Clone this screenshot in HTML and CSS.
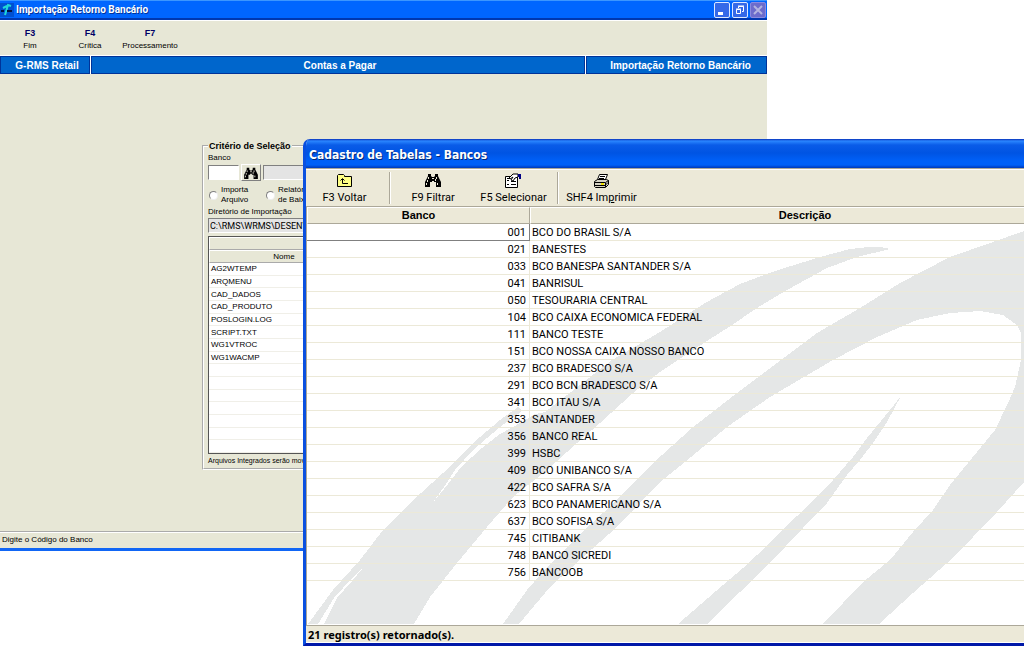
FILE: index.html
```html
<!DOCTYPE html>
<html lang="pt-BR">
<head>
<meta charset="utf-8">
<title>Cadastro de Tabelas - Bancos</title>
<link rel="stylesheet" href="styles.css">
</head>
<body>
<main class="desktop">
  <section class="import-window" aria-label="Importação Retorno Bancário">
    <header class="import-title">
      <svg class="app-icon" width="14" height="14" viewBox="0 0 14 14" aria-hidden="true"><rect width="14" height="14" fill="#0050d0"/><path d="M5 12L8 2l3 1M3 5l4-2" stroke="#20d8d8" stroke-width="2" fill="none"/><path d="M1 8h3M7 8h5" stroke="#001040" stroke-width="2"/></svg>
      <h1>Importação Retorno Bancário</h1>
      <div class="window-buttons">
        <button type="button" aria-label="Minimizar"><svg width="14" height="14" viewBox="0 0 14 14"><path d="M3 10.500h5" stroke="#fff" stroke-width="3"/></svg></button>
        <button type="button" aria-label="Restaurar"><svg width="14" height="14" viewBox="0 0 14 14"><path d="M5.500 5V3.500h5v5H9M3.500 6.500h4v4h-4zM5 3h6M3 6h5" stroke="#fff" fill="none"/></svg></button>
        <button type="button" class="close" aria-label="Fechar"><svg width="14" height="14" viewBox="0 0 14 14"><path d="M3 3l8 8M11 3l-8 8" stroke="#b4b4e0" stroke-width="2"/></svg></button>
      </div>
    </header>
    <nav class="import-menu">
      <button type="button"><b>F3</b><span>Fim</span></button>
      <button type="button"><b>F4</b><span>Crítica</span></button>
      <button type="button"><b>F7</b><span>Processamento</span></button>
    </nav>
    <div class="path-bar">
      <span>G-RMS Retail</span><span>Contas a Pagar</span><span>Importação Retorno Bancário</span>
    </div>
    <form class="import-body">
      <fieldset class="criteria">
        <legend>Critério de Seleção</legend>
        <label for="banco">Banco</label>
        <div class="bank-row">
          <input id="banco" type="text">
          <button type="button" aria-label="Procurar banco"><svg width="14" height="12" viewBox="0 0 16 14"><use href="#binoculars"/></svg></button>
          <input class="bank-name" type="text" readonly aria-label="Nome do banco">
        </div>
        <div class="mode-row">
          <label><input type="radio" name="modo"><span>Importa<br>Arquivo</span></label>
          <label><input type="radio" name="modo"><span>Relatório<br>de Baixas</span></label>
        </div>
        <label for="dir">Diretório de Importação</label>
        <input id="dir" class="directory" type="text" readonly value="C:\RMS\WRMS\DESENV">
        <table class="files">
          <thead>
            <tr><th class="name"></th><th></th></tr>
            <tr><th>Nome</th><th></th></tr>
          </thead>
          <tbody>
            <tr><td>AG2WTEMP</td><td></td></tr>
            <tr><td>ARQMENU</td><td></td></tr>
            <tr><td>CAD_DADOS</td><td></td></tr>
            <tr><td>CAD_PRODUTO</td><td></td></tr>
            <tr><td>POSLOGIN.LOG</td><td></td></tr>
            <tr><td>SCRIPT.TXT</td><td></td></tr>
            <tr><td>WG1VTROC</td><td></td></tr>
            <tr><td>WG1WACMP</td><td></td></tr>
            <tr><td></td><td></td></tr>
            <tr><td></td><td></td></tr>
            <tr><td></td><td></td></tr>
            <tr><td></td><td></td></tr>
            <tr><td></td><td></td></tr>
            <tr><td></td><td></td></tr>
            <tr><td></td><td></td></tr>
          </tbody>
        </table>
        <p class="note">Arquivos Integrados serão movidos</p>
      </fieldset>
    </form>
    <footer class="import-status">Digite o Código do Banco</footer>
  </section>

  <section class="banks-window" aria-label="Cadastro de Tabelas - Bancos">
    <header class="banks-title"><h2>Cadastro de Tabelas - Bancos</h2></header>
    <div class="toolbar">
      <button type="button" class="tool-back">
        <svg width="16" height="14" viewBox="0 0 16 14" aria-hidden="true"><path d="M.5 13.500v-11l1-1h5l1 1v1h7v10z" fill="#ffff84" stroke="#000"/><path d="M5.500 6v4.500H11M3.500 7.500l2-2 2 2" fill="none" stroke="#000"/></svg>
        F3 Voltar
      </button>
      <button type="button" class="tool-filter">
        <svg width="16" height="14" viewBox="0 0 16 14" aria-hidden="true"><g id="binoculars"><path d="M3 1h3v2l1 1h2l1-1V1h3v2l3 6v5h-5V9H9V8H7v1H5v5H0V9l3-6z" fill="#000"/><path d="M3.500 4v2M2.500 7v2M1.500 10v2M11.500 4v2M10.500 6v2M12.500 10v2M7 5.500h2" stroke="#ece9d8"/></g></svg>
        F9 Filtrar
      </button>
      <button type="button" class="tool-select">
        <svg width="18" height="16" viewBox="0 0 18 16" aria-hidden="true"><path d="M.5 3.500h12v11H.5z" fill="#fff" stroke="#000"/><path d="M2 7.500h2M6 8.500h5M2 11.500h2M6 11.500h5M2 5.500h2" stroke="#000"/><path d="M4 5l4-4h5v3l-3 1-2 3-2-1 2-3-3 2z" fill="#fff" stroke="#000"/><path d="M13 1h3v5h-2V4h-1z" fill="#000084"/></svg>
        F5 Selecionar
      </button>
      <button type="button" class="tool-print">
        <svg width="18" height="16" viewBox="0 0 18 16" aria-hidden="true"><path d="M4.500 6.500l2-5h8l-2 5z" fill="#fff" stroke="#000"/><path d="M7 3.500h5M6 5.500h5" stroke="#000"/><path d="M1.500 8.500l3-2h9l2 1v4l-3 3h-10l-1-1z" fill="#d6d3c4" stroke="#000"/><path d="M1.500 9.500h11l3-2M2 12.500h10l3-3M12.500 10v4" fill="none" stroke="#000"/><path d="M8 11h3" stroke="#f0e000" stroke-width="2"/></svg>
        <span>SHF4 Im<u>p</u>rimir</span>
      </button>
    </div>
    <div class="grid">
      <svg class="watermark" viewBox="307 224 773 400" preserveAspectRatio="xMinYMin meet" aria-hidden="true">
        <g fill="#e5e7e7" shape-rendering="crispEdges">
          <path d="M890 249L880 247L868 247L850 249L820 257L775 271L740 284L705 303L660 332L612 360L580 385L545 412L535 414L522 422L500 434L482 448L462 466L444 489L431 505L444 487L455 470L473 450L500 427L522 411L518 407L500 420L473 443L443 473L410 503L383 530L360 560L333 590L308 624H414L430 597L457 563L487 527L513 497L547 470L577 443L600 423L633 393L660 372L693 350L732 325L757 308L787 290L827 268L857 257Z"/>
          <path d="M1024 231L993 242L950 257L900 283L860 308L817 333L777 363L737 393L692 428L662 455L633 483L603 513L577 537L547 567L527 590L503 624H519L550 587L583 557L617 527L660 482L685 462L727 427L770 397L833 360L877 337L917 320L950 313L980 311L1003 315L1017 325L1021 333V360L1015 387L1008 403L995 430L972 458L950 485L933 510L913 532L890 560L863 582L823 624H879L913 593L947 563L973 537L997 512L1024 482Z"/>
          <path d="M901 396L890 410L867 438L853 457L833 480L807 507L787 525L770 543L743 568L723 585L678 624H707L740 592L770 563L803 528L827 503L847 475L860 460L873 443L887 422Z"/>
          <path fill="#fff" d="M318 624L334 598L353 577L367 563L352 581L337 598L324 624Z"/>
        </g>
      </svg>
      <table class="banks">
        <thead><tr><th class="code">Banco</th><th>Descrição</th></tr></thead>
        <tbody>
          <tr><td class="current">001</td><td>BCO DO BRASIL S/A</td></tr>
          <tr><td>021</td><td>BANESTES</td></tr>
          <tr><td>033</td><td>BCO BANESPA SANTANDER S/A</td></tr>
          <tr><td>041</td><td>BANRISUL</td></tr>
          <tr><td>050</td><td>TESOURARIA CENTRAL</td></tr>
          <tr><td>104</td><td>BCO CAIXA ECONOMICA FEDERAL</td></tr>
          <tr><td>111</td><td>BANCO TESTE</td></tr>
          <tr><td>151</td><td>BCO NOSSA CAIXA NOSSO BANCO</td></tr>
          <tr><td>237</td><td>BCO BRADESCO S/A</td></tr>
          <tr><td>291</td><td>BCO BCN BRADESCO S/A</td></tr>
          <tr><td>341</td><td>BCO ITAU S/A</td></tr>
          <tr><td>353</td><td>SANTANDER</td></tr>
          <tr><td>356</td><td>BANCO REAL</td></tr>
          <tr><td>399</td><td>HSBC</td></tr>
          <tr><td>409</td><td>BCO UNIBANCO S/A</td></tr>
          <tr><td>422</td><td>BCO SAFRA S/A</td></tr>
          <tr><td>623</td><td>BCO PANAMERICANO S/A</td></tr>
          <tr><td>637</td><td>BCO SOFISA S/A</td></tr>
          <tr><td>745</td><td>CITIBANK</td></tr>
          <tr><td>748</td><td>BANCO SICREDI</td></tr>
          <tr><td>756</td><td>BANCOOB</td></tr>
        </tbody>
      </table>
    </div>
    <footer class="banks-status">21 registro(s) retornado(s).</footer>
  </section>
</main>
</body>
</html>
```
FILE: styles.css
```css
* { box-sizing: border-box; }
body { margin: 0; background: #fff; color: #000; font-family: "Liberation Sans", Arial, sans-serif; }
h1, h2, p { margin: 0; }
button, input { font: inherit; color: inherit; margin: 0; }
button { padding: 0; border: 0; background: none; }
table { border-collapse: separate; border-spacing: 0; table-layout: fixed; width: 100%; }
th, td { padding: 0; overflow: hidden; white-space: nowrap; }

.desktop { position: relative; height: 100vh; overflow: hidden; }

/* Import window */
.import-window { position: absolute; left: 0; top: 0; bottom: 99px; width: 767px; display: flex; flex-direction: column; background: #e7e7d6; font-size: 8px; border-bottom: 3px solid #1166f5; }
.import-title { display: flex; align-items: center; gap: 2px; height: 20px; border-top: 1px solid #3c96ff; border-bottom: 2px solid #0038b0; background: #0066ff; color: #fff; }
.import-title h1 { flex: 1; font: bold 10px/18px Roboto, sans-serif; text-shadow: 1px 1px #003399; }
.window-buttons { display: flex; gap: 2px; padding-right: 1px; }
.window-buttons button { width: 16px; height: 16px; border: 1px solid #dce8ff; border-radius: 2px; background: #3569e8; display: flex; }
.window-buttons .close { border-color: #8a8ae0; background: #6c6ccc; }
.import-menu { display: flex; height: 36px; padding-top: 6px; border-top: 1px solid #fff; border-bottom: 1px solid #fff; }
.import-menu button { width: 60px; display: flex; flex-direction: column; align-items: center; line-height: 14px; white-space: nowrap; }
.import-menu b { color: #000066; font-size: 9px; line-height: 12px; }
.path-bar { display: grid; grid-template-columns: 90px 1fr 181px; column-gap: 1px; height: 18px; background: #fff; border-bottom: 1px solid #fff; }
.path-bar span { padding: 1px 0 0 4px; background: #0066cc; border: 1px solid #003399; color: #fff; font-size: 10px; font-weight: bold; line-height: 15px; text-align: center; white-space: nowrap; }
.path-bar span:last-child { padding-left: 8px; }
.import-body { flex: 1; padding: 66px 200px 0 202px; }
.criteria { margin: 0; padding: 1px 4px 2px; min-width: 0; border: 2px groove #fff; line-height: 10px; }
.criteria legend { padding: 0 1px; font-size: 9px; font-weight: bold; line-height: 12px; }
.criteria > label { display: block; height: 11px; white-space: nowrap; }
.criteria input[type="text"] { display: block; height: 15px; padding: 0 1px; border: 1px solid; border-color: #808080 #fff #fff #808080; border-radius: 0; background: #fff; outline: 0; }
.bank-row { display: flex; gap: 2px; align-items: center; height: 17px; }
.bank-row input { width: 31px; }
.bank-row button { width: 20px; height: 17px; border: 1px solid; border-color: #fff #808080 #808080 #fff; display: grid; place-items: center; }
.criteria .bank-name { flex: 1; }
.criteria input[readonly] { background: #e4e4e4; }
.mode-row { display: flex; gap: 12px; padding: 4px 0 2px 1px; }
.mode-row label { display: flex; align-items: center; gap: 3px; width: 45px; white-space: nowrap; }
.mode-row input { appearance: none; flex: none; width: 9px; height: 9px; border: 1px solid; border-color: #808080 #eee #eee #808080; border-radius: 50%; background: #fff; }
.criteria .directory { width: 100%; margin-bottom: 3px; font: 9px Roboto, sans-serif; }
.files { height: 218px; border: 1px solid #555; background: #fff; }
.files .name { width: 150px; }
.files th { height: 13px; background: #e7e7d6; border: 1px solid; border-color: #fff #aaa #aaa #fff; font-weight: normal; line-height: 11px; }
.files td { height: 12px; padding: 1px 0 0 2px; border-bottom: 1px solid #f0efe8; line-height: 10px; }
.note { padding-top: 2px; font-size: 7px; white-space: nowrap; }
.import-status { height: 17px; border-top: 1px solid #aaa; padding-left: 2px; line-height: 15px; box-shadow: inset 0 1px #fff; }

/* Bank table window, running past the right edge of the desktop */
.banks-window { position: absolute; left: 303px; right: -56px; top: 139px; bottom: 4px; display: flex; flex-direction: column; background: #ece9d8; border-left: 3px solid #0a50e0; border-bottom: 3px solid #0018a8; border-top-left-radius: 7px; overflow: hidden; font-size: 11px; }
.banks-title { height: 29px; padding-left: 3px; background: linear-gradient(#0830b8 0, #2a86ff 2px, #0a5ce8 6px, #0054e3 14px, #0060f8 22px, #0060f8 26px, #0038b8 29px); color: #fff; }
.banks-title h2 { font: bold 12px/33px "DejaVu Sans Condensed", "Noto Sans", sans-serif; text-shadow: 1px 1px #002878; }
.toolbar { display: flex; height: 39px; padding-top: 3px; border-top: 1px solid #aca899; border-bottom: 1px solid #aca899; box-shadow: inset 0 1px #fff; font-family: Roboto, sans-serif; }
.toolbar button { display: flex; flex-direction: column; align-items: center; justify-content: space-between; height: 32px; line-height: 13px; white-space: nowrap; }
.toolbar svg { margin-top: 1px; }
.toolbar .tool-back, .toolbar .tool-select { border-right: 1px solid #aca899; box-shadow: 1px 0 #fff; }
.tool-back { width: 84px; padding-right: 6px; }
.tool-filter { width: 86px; }
.toolbar .tool-select { width: 82px; padding-right: 6px; }
.tool-print { width: 87px; }
.grid { position: relative; flex: 1; min-height: 0; overflow: hidden; background: #fff; border-left: 1px solid #aca899; }
.watermark { position: absolute; left: 0; top: 17px; width: 100%; }
.banks { position: relative; }
.banks th { height: 17px; background: #ece9d8; border: 1px solid; border-color: #fff #aca899 #aca899 #fff; line-height: 15px; }
.banks .code { width: 223px; }
.banks td { height: 17px; padding: 1px 0 0 2px; border-bottom: 1px solid #ece9d8; font-family: Roboto, sans-serif; line-height: 15px; vertical-align: top; }
.banks td:first-child { padding-right: 3px; border-right: 1px solid #ece9d8; text-align: right; }
.banks td.current { border-color: #808080; }
.banks-status { height: 18px; padding-left: 2px; border-top: 1px solid #aca899; border-bottom: 1px solid #fff; font: bold 11px/17px "Noto Sans", sans-serif; }
```
